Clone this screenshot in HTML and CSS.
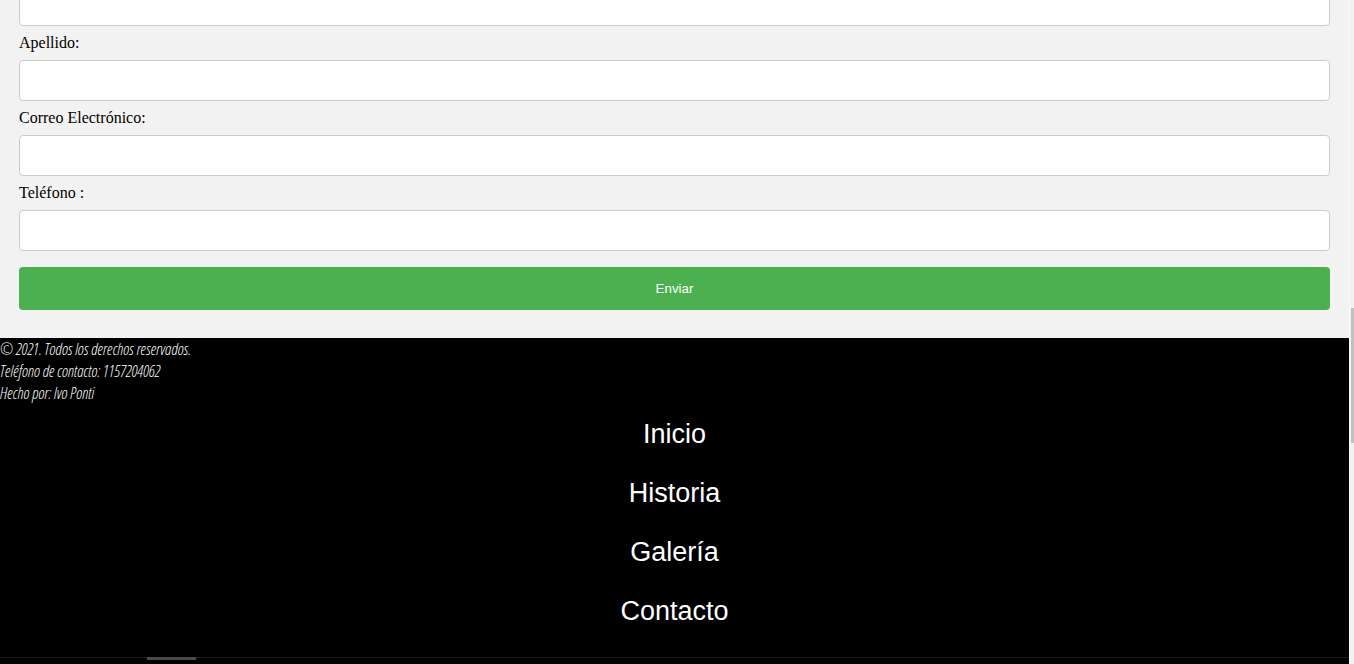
FILE: index.html
```html
<!DOCTYPE html>
<html lang="es">
<head>
<meta charset="utf-8">
<title>Contacto</title>
<link rel="stylesheet" href="styles.css">
</head>
<body>
<div class="frame">
  <div class="page">
    <section class="form-card">
      <form class="contact-form">
        <input class="field" id="nombre" type="text" aria-label="Nombre">
        <label class="field-label" for="apellido">Apellido:</label>
        <input class="field" id="apellido" type="text">
        <label class="field-label" for="correo">Correo Electrónico:</label>
        <input class="field" id="correo" type="email">
        <label class="field-label" for="telefono">Teléfono :</label>
        <input class="field" id="telefono" type="tel">
        <button class="submit" type="button">Enviar</button>
      </form>
    </section>
    <footer class="site-footer">
      <div class="credits">
        <p>© 2021. Todos los derechos reservados.</p>
        <p>Teléfono de contacto: 1157204062</p>
        <p>Hecho por: Ivo Ponti</p>
      </div>
      <nav class="footer-nav">
        <a href="#">Inicio</a>
        <a href="#">Historia</a>
        <a href="#">Galería</a>
        <a href="#">Contacto</a>
      </nav>
      <div class="hscroll"><div class="hscroll-thumb"></div></div>
    </footer>
  </div>
  <div class="vscroll"><div class="vscroll-thumb"></div></div>
</div>
</body>
</html>
```

FILE: styles.css
```css
html, body {
  margin: 0;
  padding: 0;
  height: 100%;
  overflow: hidden;
  background: #ffffff;
}

.frame {
  display: flex;
  width: 1354px;
  height: 664px;
  overflow: hidden;
}

.page {
  width: 1349px;
  flex: none;
  display: flex;
  flex-direction: column;
}

.form-card {
  background: #f2f2f2;
  margin-top: -23px;
  padding: 0 19px 20px;
}

.contact-form {
  display: flex;
  flex-direction: column;
}

.field-label {
  font-family: "Liberation Serif", "Times New Roman", serif;
  font-size: 16px;
  line-height: 18px;
  color: #000;
}

.field {
  display: block;
  box-sizing: border-box;
  width: 100%;
  height: 41px;
  margin: 8px 0;
  padding: 12px 20px;
  border: 1px solid #ccc;
  border-radius: 4px;
  background: #fff;
  font-family: "Liberation Sans", Arial, sans-serif;
  font-size: 13px;
}

.submit {
  display: block;
  width: 100%;
  height: 43px;
  margin: 8px 0;
  padding: 14px 20px;
  border: none;
  border-radius: 4px;
  background: #4caf50;
  color: #fff;
  font-family: "Liberation Sans", Arial, sans-serif;
  font-size: 13.33px;
  line-height: 15px;
}

.site-footer {
  flex: 1;
  position: relative;
  background: #000;
  color: #fff;
}

.credits p {
  margin: 0;
  font-family: "Open Sans", "DejaVu Sans Condensed", sans-serif;
  font-style: italic;
  font-weight: 330;
  font-stretch: 75%;
  font-size: 16px;
  line-height: 22px;
}

.footer-nav {
  display: flex;
  flex-direction: column;
  align-items: center;
  padding-top: 1px;
}

.footer-nav a {
  font-family: "Liberation Sans", Arial, sans-serif;
  font-size: 27px;
  line-height: 59px;
  color: #fff;
  text-decoration: none;
}

.hscroll {
  position: absolute;
  left: 0;
  right: 0;
  top: 319px;
  height: 1px;
  background: #1c1c1c;
}

.hscroll-thumb {
  margin-left: 147px;
  width: 49px;
  height: 3px;
  background: #4a4a4a;
}

.vscroll {
  width: 5px;
  flex: none;
  background: #f1f1f1;
  border-left: 1px solid #fafafa;
  box-sizing: border-box;
}

.vscroll-thumb {
  margin-top: 308px;
  margin-left: 1px;
  width: 3px;
  height: 135px;
  background: #c1c1c1;
}
```
